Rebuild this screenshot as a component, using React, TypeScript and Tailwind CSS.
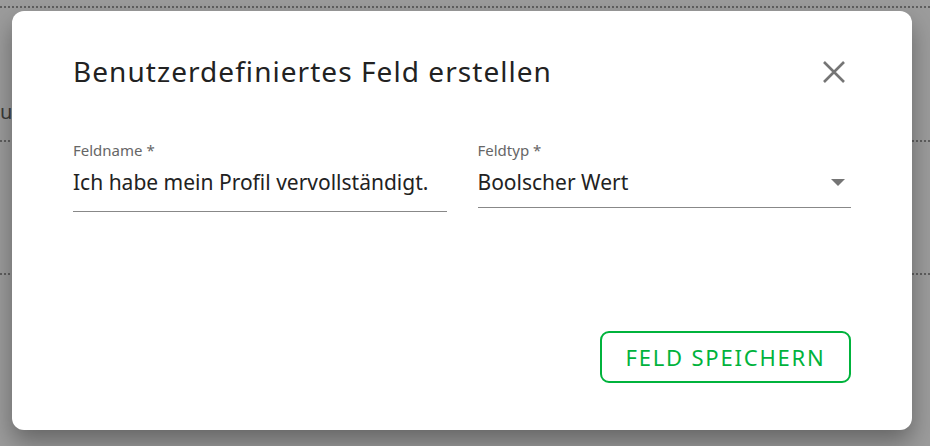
export default function App() {
  return (
    <main
      className="relative w-[930px] h-[446px] overflow-hidden bg-[#9c9c9c]"
      style={{ fontFamily: "'Noto Sans', Lato, sans-serif" }}
    >
      {/* page behind the backdrop */}
      <div className="flex flex-col">
        <div className="h-[8px] border-b-2 border-dotted border-[#5f5f5f]" />
        <div className="h-[134px] border-b-2 border-dotted border-[#5f5f5f] flex items-start pt-[92px]">
          <span className="text-[20px] leading-[24px] text-[#3a3a3a]">ur</span>
        </div>
        <div className="h-[133px] border-b-2 border-dotted border-[#5f5f5f]" />
      </div>

      {/* dialog */}
      <div className="absolute left-[12px] top-[11px] w-[900px] h-[419px] bg-white rounded-[12px] shadow-[0_12px_24px_rgba(0,0,0,0.35)] flex flex-col px-[61px] pt-[41px] pb-[47px]">
        <div className="flex items-center justify-between">
          <h2 className="text-[28px] tracking-[1.05px] text-[#222] leading-[38px]">Benutzerdefiniertes Feld erstellen</h2>
          <button className="mr-[6px] mt-[2px]">
            <svg width="22" height="22" viewBox="0 0 22 22">
              <path d="M1 1 L21 21 M21 1 L1 21" stroke="#757575" strokeWidth="2.6" fill="none" />
            </svg>
          </button>
        </div>

        <div className="flex gap-[31px] mt-[51px]">
          <div className="w-[374px] flex flex-col">
            <label className="text-[15px] text-[#666] leading-[18px]">Feldname *</label>
            <div className="mt-[9px] pb-[15px] border-b border-[#888] text-[21px] text-[#222] leading-[28px]">
              Ich habe mein Profil vervollständigt.
            </div>
          </div>
          <div className="w-[374px] flex flex-col">
            <label className="text-[15px] text-[#666] leading-[18px]">Feldtyp *</label>
            <div className="mt-[9px] pb-[11px] border-b border-[#888] text-[21px] text-[#222] leading-[28px] flex items-center justify-between">
              <span>Boolscher Wert</span>
              <svg width="14" height="7" viewBox="0 0 14 7" className="mr-[6px]">
                <path d="M0 0 L14 0 L7 7 Z" fill="#757575" />
              </svg>
            </div>
          </div>
        </div>

        <div className="mt-auto flex justify-end">
          <button className="w-[251px] h-[52px] border-2 border-[#00b33c] rounded-[9px] text-[#00b33c] text-[22px] tracking-[1.8px] leading-[28px]">
            FELD SPEICHERN
          </button>
        </div>
      </div>
    </main>
  );
}
